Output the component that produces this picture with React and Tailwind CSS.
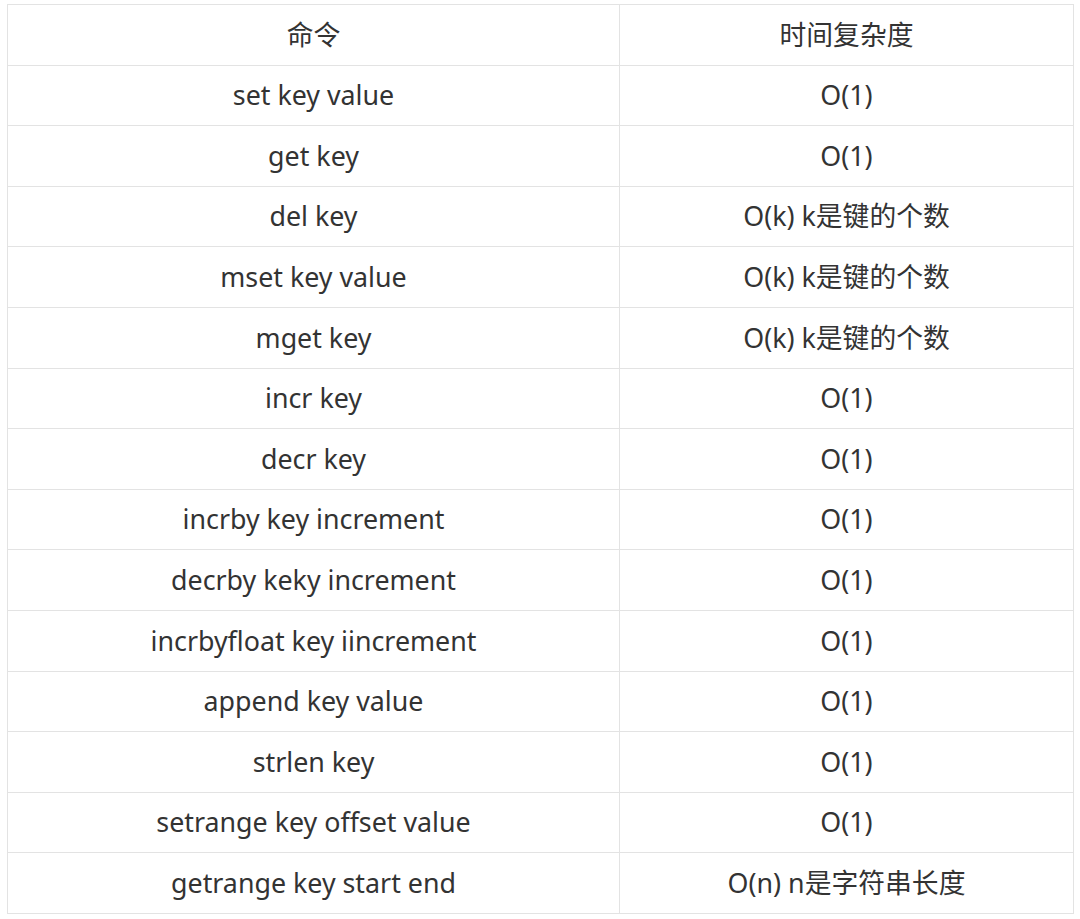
const rows = [
  ['set key value', 'O(1)'],
  ['get key', 'O(1)'],
  ['del key', 'O(k) k是键的个数'],
  ['mset key value', 'O(k) k是键的个数'],
  ['mget key', 'O(k) k是键的个数'],
  ['incr key', 'O(1)'],
  ['decr key', 'O(1)'],
  ['incrby key increment', 'O(1)'],
  ['decrby keky increment', 'O(1)'],
  ['incrbyfloat key iincrement', 'O(1)'],
  ['append key value', 'O(1)'],
  ['strlen key', 'O(1)'],
  ['setrange key offset value', 'O(1)'],
  ['getrange key start end', 'O(n) n是字符串长度'],
];

export default function App() {
  return (
    <div className="h-[919px] w-[1080px] bg-white pl-[7px] pt-[4px] font-['Noto_Sans','Noto_Sans_CJK_SC',sans-serif] text-[#333]">
      <table className="w-[1067px] border-collapse text-[26.8px]">
        <thead>
          <tr className="h-[60.6px]">
            <th className="w-[612px] border border-[#e3e3e3] text-center font-normal">命令</th>
            <th className="border border-[#e3e3e3] text-center font-normal">时间复杂度</th>
          </tr>
        </thead>
        <tbody>
          {rows.map(([cmd, cost]) => (
            <tr key={cmd} className="h-[60.6px]">
              <td className="border border-[#e3e3e3] text-center">{cmd}</td>
              <td className="border border-[#e3e3e3] text-center">{cost}</td>
            </tr>
          ))}
        </tbody>
      </table>
    </div>
  );
}
